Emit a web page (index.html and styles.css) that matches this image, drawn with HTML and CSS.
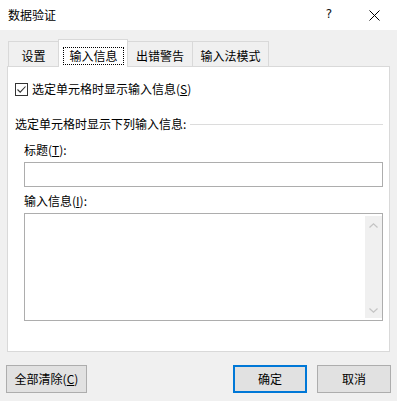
FILE: index.html
```html
<!DOCTYPE html>
<html lang="zh-CN">
<head>
<meta charset="utf-8">
<title>数据验证</title>
<link rel="stylesheet" href="styles.css">
</head>
<body>
<div class="dialog">
  <div class="titlebar">
    <span class="title">数据验证</span>
    <span class="help">?</span>
    <svg class="close" width="11" height="11" viewBox="0 0 11 11"><path d="M0.5 0.5 L10.5 10.5 M10.5 0.5 L0.5 10.5" stroke="#000" stroke-width="1" fill="none"/></svg>
  </div>
  <div class="tabs">
    <div class="tab t1">设置</div>
    <div class="tab active"><span class="focus">输入信息</span></div>
    <div class="tab t3">出错警告</div>
    <div class="tab t4">输入法模式</div>
  </div>
  <div class="panel">
    <div class="check-row">
      <span class="checkbox"><svg width="11" height="11" viewBox="0 0 11 11"><path d="M1.5 5.5 L4.2 8.2 L9.5 2.5" stroke="#333" stroke-width="1.1" fill="none"/></svg></span>
      <span class="check-text">选定单元格时显示输入信息(<u>S</u>)</span>
    </div>
    <div class="group-head"><span>选定单元格时显示下列输入信息:</span><span class="rule"></span></div>
    <div class="field-label first">标题(<u>T</u>):</div>
    <div class="input"></div>
    <div class="field-label second">输入信息(<u>I</u>):</div>
    <div class="textarea">
      <div class="ta-body"></div>
      <div class="scrollbar">
        <svg width="9" height="5" viewBox="0 0 9 5"><path d="M0.5 4.5 L4.5 0.8 L8.5 4.5" stroke="#c4c4c4" stroke-width="1.2" fill="none"/></svg>
        <svg width="9" height="5" viewBox="0 0 9 5"><path d="M0.5 0.5 L4.5 4.2 L8.5 0.5" stroke="#c4c4c4" stroke-width="1.2" fill="none"/></svg>
      </div>
    </div>
  </div>
  <div class="buttons">
    <button class="btn clear">全部清除(<u>C</u>)</button>
    <span class="spacer"></span>
    <button class="btn primary">确定</button>
    <button class="btn">取消</button>
  </div>
</div>
</body>
</html>
```
FILE: styles.css
```css
html, body {
  margin: 0;
  padding: 0;
}
body {
  background: #f0f0f0;
  font-family: "Noto Sans CJK SC", "Noto Sans", sans-serif;
  font-size: 12px;
  color: #000;
}
* { box-sizing: border-box; }
.dialog {
  width: 397px;
  height: 401px;
  display: flex;
  flex-direction: column;
}
.titlebar {
  height: 30px;
  background: #fff;
  display: flex;
  align-items: center;
  padding-left: 8px;
}
.title {
  line-height: 16px;
  margin-top: -1px;
}
.help {
  margin-left: auto;
  line-height: 16px;
  font-family: "DejaVu Sans", sans-serif;
  font-size: 12px;
  color: #111;
  margin-top: -2px;
}
.close {
  margin-left: 37px;
  margin-right: 17px;
  margin-top: 1px;
}
.tabs {
  display: flex;
  align-items: flex-end;
  height: 27px;
  margin-top: 9px;
  padding-left: 8px;
}
.tab {
  height: 25px;
  border: 1px solid #d9d9d9;
  border-bottom: none;
  padding-top: 6px;
  line-height: 16px;
  text-align: center;
  background: #f0f0f0;
  margin-left: -1px;
}
.tab.t1 { width: 51px; margin-left: 0; }
.tab.t3 { width: 66px; }
.tab.t4 { width: 77px; }
.tab.active {
  width: 70px;
  height: 28px;
  margin-bottom: -1px;
  background: #fff;
  position: relative;
  z-index: 1;
  padding-top: 7px;
  display: flex;
  justify-content: center;
  align-items: flex-start;
}
.focus {
  display: block;
  width: 61px;
  height: 18px;
  border: 1px dotted #000;
  line-height: 16px;
  text-align: center;
  margin-left: 1px;
}
.panel {
  margin-left: 7px;
  width: 383px;
  height: 286px;
  border: 1px solid #d9d9d9;
  background: #fff;
  padding: 14px 6px 0 7px;
  display: flex;
  flex-direction: column;
}
.check-row {
  display: flex;
  align-items: center;
  height: 16px;
  line-height: 16px;
  margin-left: 0;
}
.checkbox {
  width: 13px;
  height: 13px;
  border: 1px solid #333;
  background: #fff;
  display: flex;
  align-items: center;
  justify-content: center;
}
.check-text {
  margin-left: 4px;
}
.group-head {
  display: flex;
  align-items: center;
  height: 16px;
  line-height: 16px;
  margin-top: 19px;
}
.rule {
  flex: 1;
  height: 1px;
  background: #dcdcdc;
  margin-left: 4px;
}
.field-label {
  height: 16px;
  line-height: 16px;
  margin-left: 9px;
}
.field-label.first { margin-top: 10px; }
.field-label.second { margin-top: 6px; }
.input {
  margin-left: 9px;
  margin-top: 4px;
  height: 25px;
  border: 1px solid #adadad;
  background: #fff;
}
.textarea {
  margin-left: 9px;
  margin-top: 4px;
  height: 108px;
  border: 1px solid #adadad;
  background: #fff;
  display: flex;
  padding: 2px 0 2px 0;
}
.ta-body { flex: 1; }
.scrollbar {
  width: 17px;
  background: #f0f0f0;
  display: flex;
  flex-direction: column;
  align-items: center;
  justify-content: space-between;
  padding: 7px 0 5px 0;
}
.buttons {
  display: flex;
  margin-top: 13px;
  padding: 0 6px;
}
.spacer { flex: 1; }
.btn {
  height: 28px;
  width: 74px;
  border: 1px solid #adadad;
  background: #e1e1e1;
  font-family: "Noto Sans CJK SC", "Noto Sans", sans-serif;
  font-size: 12px;
  line-height: 16px;
  color: #000;
  padding: 0;
  margin: 0 0 0 10px;
}
.btn.clear {
  width: 81px;
  margin-left: 0;
}
.btn.primary {
  border: 2px solid #0078d7;
}
u { text-underline-offset: 1px; }
```
